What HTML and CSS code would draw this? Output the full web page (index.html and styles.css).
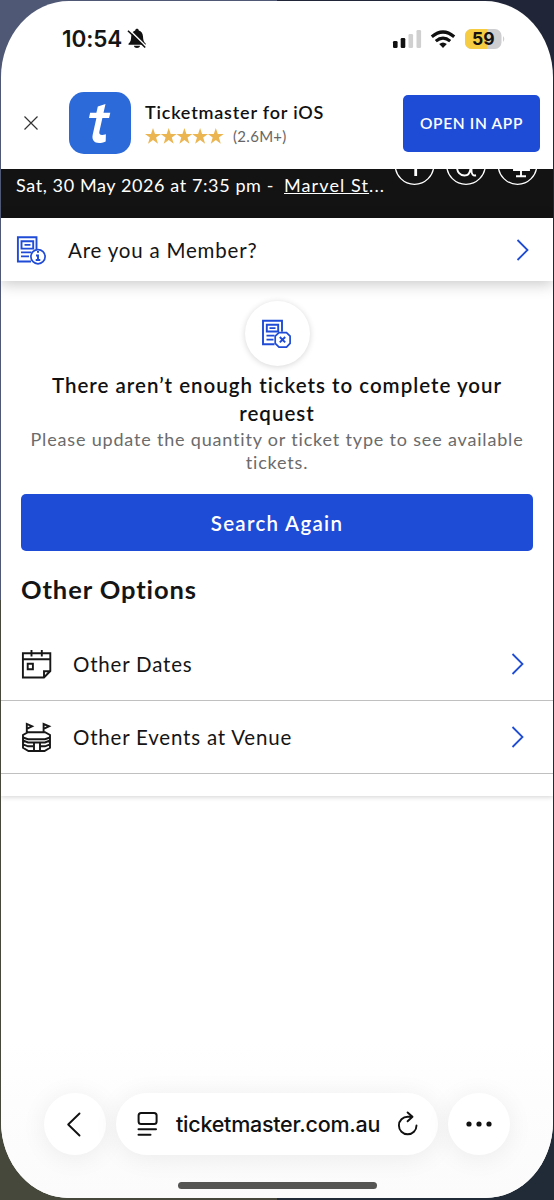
FILE: index.html
```html
<!DOCTYPE html>
<html lang="en">
<head>
<meta charset="utf-8">
<title>Ticketmaster</title>
<link rel="stylesheet" href="styles.css">
</head>
<body>
<div class="screen">
  <header class="status">
    <span class="clock">10:54</span>
    <svg class="bell" viewBox="127 28 20 22" width="20" height="22"><path d="M128.500 43.800c2.300-2 2.500-4 2.700-7.300.2-3.500 2-5.500 4-6 0-2.300 3.600-2.300 3.600 0 2.500.6 4 2.500 4.200 6 .2 3.300.5 5.300 2.800 7.300v1h-17.300zM133.900 45.800h6.200c-.5 3-5.700 3-6.200 0z" fill="#111"/><path d="M129.300 29.800l17 16.700" stroke="#fff" stroke-width="1.600"/><path d="M128 30.700l17.200 16.800" stroke="#111" stroke-width="1.600"/></svg>
    <svg class="signals" viewBox="390 25 120 27" width="120" height="27">
      <rect x="393" y="40" width="4.600" height="7" rx="1.300" fill="#111"/><rect x="400.700" y="37" width="4.600" height="10" rx="1.300" fill="#111"/><rect x="408.500" y="33" width="4.600" height="14" rx="1.300" fill="#d0d0d0"/><rect x="416.500" y="29" width="4.600" height="18" rx="1.300" fill="#d0d0d0"/>
      <g fill="none" stroke="#111" stroke-width="3.200"><path d="M431.800 35.700q11.200-9.400 22.400 0"/><path d="M435.800 40.100q7.200-6.100 14.400 0"/></g><path d="M439.200 43q3.800-3 7.600 0L443 47z" fill="#111"/>
      <rect x="465" y="28" width="36.500" height="20" rx="6.500" fill="#ceced0"/><path d="M471.500 28H487v20h-15.500a6.500 6.500 0 0 1-6.500-6.500v-7a6.500 6.500 0 0 1 6.500-6.500z" fill="#f5cc42"/><path d="M503 35q2.500 3 0 6z" fill="#ceced0"/>
      <text class="battery" x="483.300" y="44.300" text-anchor="middle">59</text>
    </svg>
  </header>

  <section class="banner">
    <svg class="close" viewBox="0 0 16 16" width="16" height="16"><path d="M1.500 1.500l13 13M14.500 1.500l-13 13" stroke="#333" stroke-width="1.200"/></svg>
    <svg class="app-icon" viewBox="68.500 92 62 62" width="62" height="62"><rect x="68.500" y="92" width="62" height="62" rx="15" fill="#2b6ad8"/><path d="M97.300 106.500L105 104l-2 8.800h6.800l-1.200 5.200h-6.700l-3 13.500c-.7 3 1.300 4.300 6.500 2.700l-.2 7.200c-9 3.700-14.500.3-13-6.700l3.700-16.700H88.500l1.100-5.200h6.300z" fill="#fff"/></svg>
    <div class="app-info">
      <div class="app-name">Ticketmaster for iOS</div>
      <div class="rating">
        <svg viewBox="0 0 79 17" width="79" height="17" fill="#ebb551"><defs><path id="star" d="M8 0l2 5.900h6l-4.900 3.700 1.900 6.100-5-3.800-5 3.800 1.900-6.100L0 5.900h6z"/></defs><use href="#star"/><use href="#star" x="15.700"/><use href="#star" x="31.400"/><use href="#star" x="47.100"/><use href="#star" x="62.800"/></svg>
        <span class="count">(2.6M+)</span>
      </div>
    </div>
    <button class="open">OPEN IN APP</button>
  </section>

  <section class="event">
    <div class="event-text"><span class="date">Sat, 30 May 2026 at 7:35 pm -</span><span class="venue"><u>Marvel St</u>...</span></div>
    <svg viewBox="392 169 150 49" width="150" height="49" fill="none" stroke="#fff" stroke-width="1.300"><circle cx="414.500" cy="165" r="19.300"/><circle cx="466" cy="165" r="19.300"/><circle cx="517.500" cy="165" r="19.300"/><path d="M415.700 165v11" stroke-width="2.800"/><g stroke-width="1.900"><path d="M457 167c0 5 3 8.500 7.500 8.500s6-3 6-8.500M471.500 165v6c0 3 1.500 5 4.500 4.300"/><path d="M514 165v5h15v-5M521 170v6M516 176.300h10"/></g></svg>
  </section>

  <section class="member">
    <svg viewBox="16 235 30 30" width="30" height="30" fill="none" stroke="#1f4bd6" stroke-width="1.900"><path d="M31 261.500H17.900v-24.200h18.600v11.700"/><path d="M21.500 241.300h11.700v7.300H21.500zM24.500 244.900h6M21 252.400h10.500M21 256.400h8"/><circle cx="38" cy="256.700" r="7.100" stroke-width="1.700"/><path d="M36 255.500h2v4.300m-2.300.2h4.600M37 251.900h2"/></svg>
    <span class="member-label">Are you a Member?</span>
    <svg class="chevron" viewBox="0 0 14 24" width="14" height="24"><path d="M1.500 2l10 10-10 10"/></svg>
  </section>

  <main class="panel">
    <div class="badge"><svg viewBox="261.500 318 32 32" width="32" height="32" fill="none" stroke="#1f4bd6" stroke-width="1.900"><path d="M275 344.200h-11.500v-23.500h19v11"/><path d="M267.300 324.700h11.400v6.800h-11.400zM270 328.100h6M267 335.600h8M267 339.600h7"/><path d="M279.500 332.600h7.500l3.600 3.500v7.200l-3.600 3.900h-7.500l-3.800-3.900v-7.200z" stroke-width="1.700"/><path d="M280.300 337l5.400 5.400M285.700 337l-5.400 5.400"/></svg></div>
    <h1 class="title"><span>There aren’t enough tickets to complete your</span><br>request</h1>
    <p class="hint"><span>Please update the quantity or ticket type to see available</span><br>tickets.</p>
    <button class="search">Search Again</button>
    <h2 class="options-title">Other Options</h2>
    <a class="option">
      <svg viewBox="21 649 31 31" width="31" height="31" fill="none" stroke="#171717" stroke-width="1.900"><path d="M22.900 653.200h27.400v17.800l-6.300 6.500H22.900zM22.900 659.200h27.400M31.500 650v6.500M41.800 650v6.500M44 677v-5.800h6M27.700 663.700h5.200v5.500h-5.200z"/></svg>
      <span class="dates">Other Dates</span>
      <svg class="chevron" viewBox="0 0 14 24" width="14" height="24"><path d="M1.500 2l10 10-10 10"/></svg>
    </a>
    <a class="option">
      <svg viewBox="21 722 31 31" width="31" height="31" fill="none" stroke="#171717" stroke-width="1.900"><path d="M26.800 732v-8l5.300 2.300-5.300 2.500M43.600 732v-8l5.500 2.300-5.500 2.500M28 732.200h17l5 2.800v2.500l-5 1.700H28l-5-1.700V735zM23 737v10.700l5.500 3.300h16l5.500-3.300V737M23 740.500l5 2h17l5-2M23 744.300l5 2h5M40 746.300h5l5-2M34 751v-8M40 751v-8"/></svg>
      <span class="events">Other Events at Venue</span>
      <svg class="chevron" viewBox="0 0 14 24" width="14" height="24"><path d="M1.500 2l10 10-10 10"/></svg>
    </a>
  </main>

  <footer class="browser">
    <nav class="toolbar">
      <div class="round"><svg viewBox="63.500 1111 20 27" width="20" height="27" fill="none" stroke="#111" stroke-width="1.900" stroke-linecap="round" stroke-linejoin="round"><path d="M78 1113.500l-11.300 11 11.300 11"/></svg></div>
      <div class="address">
        <svg viewBox="137 1112 22 26" width="22" height="26" fill="none" stroke="#111" stroke-width="2" stroke-linecap="round"><rect x="138.600" y="1114" width="18" height="11" rx="2.500"/><path d="M138.500 1130.200H156M138.500 1135.700h12"/></svg>
        <span class="url">ticketmaster.com.au</span>
        <svg viewBox="397 1111 22 26" width="22" height="26" fill="none" stroke="#111" stroke-width="1.900" stroke-linecap="round" stroke-linejoin="round"><path d="M416.500 1125.500a8.800 8.800 0 1 1-8.800-8.800h4.500M407.600 1112.500l4.900 4.300-4.900 4.500"/></svg>
      </div>
      <div class="round"><svg viewBox="0 0 28 8" width="28" height="8" fill="#111"><circle cx="4" cy="4" r="2.600"/><circle cx="14" cy="4" r="2.600"/><circle cx="24" cy="4" r="2.600"/></svg></div>
    </nav>
    <div class="home"></div>
  </footer>
</div>
</body>
</html>
```
FILE: styles.css
```css
* { box-sizing: border-box; }
body {
  margin: 0; height: 1200px; padding: 1px 1px 2px; overflow: hidden;
  background: linear-gradient(to right, #4f5874 0 50%, #202638 50%) top / 100% 600px no-repeat,
    linear-gradient(to right, #45483a 0 50%, #202b37 50%) bottom / 100% 600px no-repeat;
  font-family: Lato, "Noto Sans", sans-serif; color: #151515;
}
svg { display: block; flex: none; }
button { border: 0; padding: 0; background: #1f4cd7; color: #fff; font-family: inherit; border-radius: 5px; }
.screen {
  width: 552px; height: 1197px; display: flex; flex-direction: column;
  background: #fff; border-radius: 68px / 76px; overflow: hidden;
}
.status { height: 76px; flex: none; display: flex; align-items: center; padding-left: 61px; }
.clock { font: 600 22.500px/26px Inter, sans-serif; width: 65px; letter-spacing: -.1px; white-space: nowrap; }
.signals { margin-left: 243px; }
.battery { font: 700 17.500px Inter, sans-serif; fill: #111; }
.banner { height: 92px; flex: none; display: flex; align-items: center; padding: 0 13px 0 22px; }
.app-icon { margin-left: 29.500px; }
.app-info { width: 272.500px; padding: 2px 0 0 14.500px; }
.app-name { font-weight: 600; font-size: 18px; line-height: 24px; letter-spacing: .8px; white-space: nowrap; color: #111; }
.rating { display: flex; align-items: center; gap: 9px; height: 25px; }
.count { font-size: 15px; line-height: 24px; letter-spacing: .3px; color: #666; }
.open { width: 137px; height: 57px; font-size: 15.500px; letter-spacing: .65px; font-weight: 600; }
.event { height: 49px; flex: none; background: #131313; color: #fff; display: flex; overflow: hidden; }
.event-text { display: flex; width: 391px; padding-left: 15px; font-size: 18px; line-height: 32px; white-space: nowrap; letter-spacing: .6px; }
.date { width: 268px; }
.venue { letter-spacing: 1.100px; }
.member {
  height: 63px; flex: none; display: flex; align-items: center; padding: 0 23px 0 15px;
  background: #fff; box-shadow: 0 3px 14px rgba(0,0,0,.22); position: relative;
}
.member-label { font-size: 20.500px; letter-spacing: .8px; padding-left: 22px; flex: 1; }
.chevron path { fill: none; stroke: #1f4cd7; stroke-width: 1.800px; }
.panel { height: 515px; flex: none; padding-top: 20px; display: flex; flex-direction: column; box-shadow: 0 1px 5px rgba(0,0,0,.18); }
.badge { width: 65px; height: 65px; align-self: center; display: grid; place-items: center; border-radius: 50%; background: #fff; box-shadow: 0 1px 6px rgba(0,0,0,.16); flex: none; }
.title { margin: 5px 0 0; text-align: center; font-size: 20.500px; line-height: 28px; font-weight: 600; letter-spacing: 1px; color: #111; white-space: nowrap; }
.hint { margin: 1px 0 0; text-align: center; font-size: 18px; line-height: 23px; letter-spacing: .82px; color: #6b6b6b; white-space: nowrap; }
.search { height: 57px; flex: none; margin: 20px 20px 0; font-size: 20.500px; letter-spacing: 1.300px; font-weight: 600; }
.options-title { margin: 20px 20px 0; font-size: 25.500px; line-height: 36px; letter-spacing: .9px; font-weight: 700; }
.option { display: flex; align-items: center; height: 73px; flex: none; padding: 0 28px 0 20px; border-bottom: 1.500px solid #c0c0c0; font-size: 20.500px; letter-spacing: .8px; }
.options-title + .option { height: 94px; padding-top: 21px; }
.option span { flex: 1; padding-left: 21px; }
.browser { margin-top: auto; height: 156px; flex: none; display: flex; flex-direction: column; align-items: center; background: linear-gradient(#fff, #fdfdfd 40%, #fbfbfb); }
.toolbar { display: flex; gap: 10px; padding-top: 51px; }
.round, .address { height: 62px; border-radius: 31px; background: #fff; box-shadow: 0 3px 26px rgba(0,0,0,.07); }
.round { width: 62px; display: grid; place-items: center; }
.address { width: 322px; display: flex; align-items: center; padding: 0 19px 0 21px; }
.url { flex: 1; padding-left: 17px; font: 500 21.500px/28px Inter, sans-serif; letter-spacing: -.25px; white-space: nowrap; color: #111; }
.home { width: 199px; height: 7px; border-radius: 4px; background: #555653; margin-top: 27px; }
```
